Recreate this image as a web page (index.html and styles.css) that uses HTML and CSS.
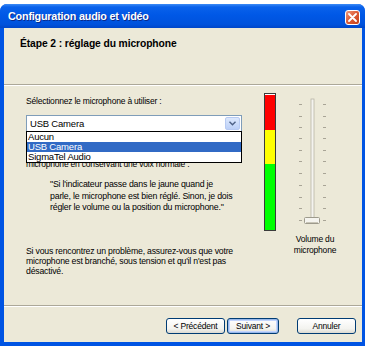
FILE: index.html
```html
<!DOCTYPE html>
<html>
<head>
<meta charset="utf-8">
<title>Configuration audio et vidéo</title>
<link rel="stylesheet" href="styles.css">
</head>
<body>
<div class="window">
    <div class="titlebar">
        <span class="title">Configuration audio et vidéo</span>
        <span class="close">
            <svg width="9" height="9" viewBox="0 0 9 9"><path d="M1 1L8 8M8 1L1 8" stroke="#fff" stroke-width="1.8" stroke-linecap="round"/></svg>
        </span>
    </div>
    <div class="client">
        <div class="header">
            <div class="step">Étape 2 : réglage du microphone</div>
        </div>
        <div class="main">
            <div class="leftcol">
                <div class="label">Sélectionnez le microphone à utiliser :</div>
                <div class="combo">
                    <div class="combobox">
                        <span class="value">USB Camera</span>
                        <span class="arrow">
                            <svg width="7" height="5" viewBox="0 0 7 5"><path d="M0.5 0.8L3.5 3.8L6.5 0.8" fill="none" stroke="#4d6185" stroke-width="1.4"/></svg>
                        </span>
                    </div>
                    <ul class="list">
                        <li>Aucun</li>
                        <li class="selected">USB Camera</li>
                        <li>SigmaTel Audio</li>
                    </ul>
                </div>
                <p class="hint">microphone en conservant une voix normale :</p>
                <p class="quote">"Si l'indicateur passe dans le jaune quand je<br>parle, le microphone est bien réglé. Sinon, je dois<br>régler le volume ou la position du microphone."</p>
                <p class="help">Si vous rencontrez un problème, assurez-vous que votre<br>microphone est branché, sous tension et qu'il n'est pas<br>désactivé.</p>
            </div>
            <div class="rightcol">
                <div class="meter">
                    <div class="red"></div>
                    <div class="yellow"></div>
                    <div class="green"></div>
                </div>
                <div class="volume">
                    <svg class="slider" width="46" height="138" viewBox="0 0 46 138">
                        <rect x="19" y="6" width="3" height="122" fill="#f4f3ee" stroke="#b8b4a6" stroke-width="0.8"/>
                        <g stroke="#a8a496" stroke-width="1">
                            <path d="M7 11.5h3M31 11.5h3"/>
                            <path d="M7 23.5h3M31 23.5h3"/>
                            <path d="M7 34.5h3M31 34.5h3"/>
                            <path d="M7 45.5h3M31 45.5h3"/>
                            <path d="M7 57.5h3M31 57.5h3"/>
                            <path d="M7 68.5h3M31 68.5h3"/>
                            <path d="M7 80.5h3M31 80.5h3"/>
                            <path d="M7 92.5h3M31 92.5h3"/>
                            <path d="M7 104.5h3M31 104.5h3"/>
                            <path d="M7 115.5h3M31 115.5h3"/>
                            <path d="M7 127.5h3M31 127.5h3"/>
                        </g>
                        <rect x="12.5" y="124.5" width="15" height="6" rx="1" fill="#f5f4ef" stroke="#9d9a8c" stroke-width="1"/>
                        <path d="M14 129.5h12" stroke="#c9c6b8" stroke-width="1"/>
                    </svg>
                    <div class="vlabel">Volume du<br>microphone</div>
                </div>
            </div>
        </div>
        <div class="footer">
            <button class="btn prev">&lt; Précédent</button>
            <button class="btn next">Suivant &gt;</button>
            <button class="btn cancel">Annuler</button>
        </div>
    </div>
</div>
</body>
</html>
```

FILE: styles.css
```css
body {
    margin: 0;
    background: #fff;
    font-family: "Liberation Sans", Arial, sans-serif;
    font-size: 8.5px;
    letter-spacing: -0.2px;
    color: #000;
}

.window {
    margin-top: 4px;
    height: 342px;
    box-sizing: border-box;
    padding: 0 3px 4px 4px;
    border-radius: 7px 7px 0 0;
    background: #0054e3;
    display: flex;
    flex-direction: column;
}

.titlebar {
    height: 24px;
    margin: 0 -3px 0 -4px;
    padding: 0 5px 0 8px;
    border-radius: 7px 7px 0 0;
    background: linear-gradient(#3d8bf5 0, #0a62eb 3px, #0058e6 45%, #0052dc 85%, #0046c8 100%);
    display: flex;
    align-items: center;
    justify-content: space-between;
}

.title {
    color: #fff;
    font-weight: bold;
    font-size: 10.8px;
    letter-spacing: -0.2px;
    text-shadow: 1px 1px 0 #0b2a8a;
}

.close {
    width: 13px;
    height: 13px;
    margin-top: 2px;
    border: 1px solid #fff;
    border-radius: 3px;
    background: linear-gradient(135deg, #f09a7c, #dc5a35 50%, #c4401b);
    display: flex;
    align-items: center;
    justify-content: center;
}

.client {
    flex: 1;
    background: #ece9d8;
    display: flex;
    flex-direction: column;
}

.header {
    height: 57px;
    border-bottom: 1px solid #aca899;
    box-shadow: 0 1px 0 #fff;
    padding: 10px 0 0 16px;
    box-sizing: border-box;
}

.step {
    font-weight: bold;
    font-size: 10.3px;
    letter-spacing: -0.1px;
}

.main {
    flex: 1;
    display: flex;
    border-bottom: 1px solid #aca899;
    box-shadow: 0 1px 0 #fff;
    margin-top: 1px;
}

.leftcol {
    width: 216px;
    margin-left: 22px;
    padding-top: 10px;
}

.label {
    line-height: 11px;
}

.combo {
    position: relative;
    margin-top: 8px;
}

.combobox {
    height: 17px;
    box-sizing: border-box;
    border: 1px solid #7f9db9;
    background: #fff;
    display: flex;
    align-items: center;
    justify-content: space-between;
    padding-left: 3px;
    font-size: 9.5px;
}

.arrow {
    width: 15px;
    height: 13px;
    margin-right: 1px;
    border-radius: 2px;
    background: linear-gradient(#dce8fd, #bcd0f7);
    border: 1px solid #b7caf2;
    box-sizing: border-box;
    display: flex;
    align-items: center;
    justify-content: center;
}

.list {
    position: absolute;
    left: 0;
    right: 0;
    top: 16px;
    margin: 0;
    padding: 0;
    list-style: none;
    background: #fff;
    border: 1px solid #000;
    font-size: 9.5px;
    z-index: 1;
}

.list li {
    height: 10px;
    line-height: 10px;
    padding-left: 1px;
}

.list .selected {
    background: #316ac5;
    color: #fff;
}

.hint {
    margin: 27px 0 0;
    line-height: 11px;
}

.quote {
    margin: 9px 0 0 24px;
    line-height: 11.5px;
    font-size: 8.8px;
    white-space: nowrap;
}

.help {
    margin: 32px 0 0;
    line-height: 10px;
    font-size: 8.7px;
    white-space: nowrap;
}

.rightcol {
    display: flex;
    margin-left: 22px;
    padding-top: 7px;
}

.meter {
    width: 12px;
    height: 138px;
    box-sizing: border-box;
    border: 1px solid #3a3a3a;
    border-top: 2px solid #fff;
    outline: 1px solid #3a3a3a;
    outline-offset: -1px;
    display: flex;
    flex-direction: column;
}

.red {
    height: 35px;
    background: #f00;
}

.yellow {
    height: 34px;
    background: #ff0;
}

.green {
    flex: 1;
    background: #0f0;
}

.volume {
    margin-left: 16px;
    width: 46px;
    display: flex;
    flex-direction: column;
    align-items: center;
}

.slider {
    display: block;
}

.vlabel {
    margin-top: 3px;
    line-height: 11px;
    text-align: center;
    white-space: nowrap;
}

.footer {
    height: 35px;
    margin-top: 1px;
    box-sizing: border-box;
    padding: 11px 6px 0 0;
    display: flex;
    justify-content: flex-end;
    align-items: flex-start;
}

.btn {
    height: 16px;
    padding: 0;
    font-family: "Liberation Sans", Arial, sans-serif;
    font-size: 8.5px;
    letter-spacing: -0.2px;
    color: #000;
    border: 1px solid #003c74;
    border-radius: 3px;
    background: linear-gradient(#fff, #f3f3ef 70%, #dcdad1);
}

.prev {
    width: 59px;
}

.next {
    width: 52px;
    margin-left: 2px;
    box-shadow: inset 0 0 0 1px #98b8ea, inset 0 0 0 2px #c3d5fd;
}

.cancel {
    width: 59px;
    margin-left: 18px;
}
```
